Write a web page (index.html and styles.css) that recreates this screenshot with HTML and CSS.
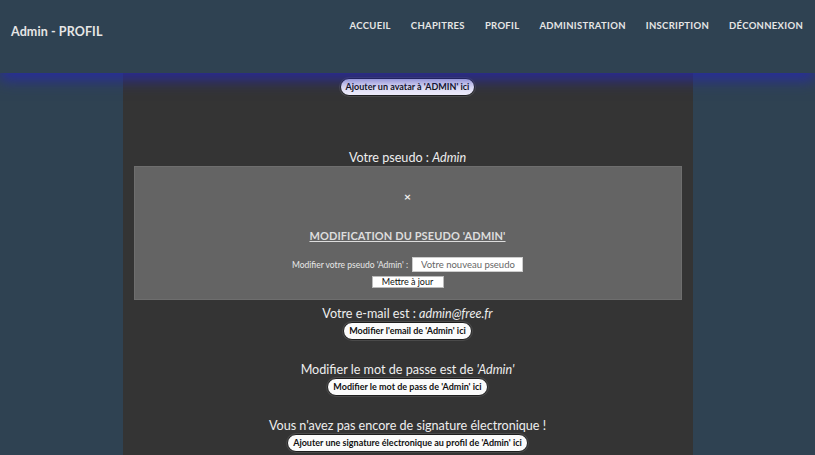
FILE: index.html
```html
<!DOCTYPE html>
<html lang="fr">
<head>
<meta charset="utf-8">
<title>Admin - PROFIL</title>
<link rel="stylesheet" href="styles.css">
</head>
<body>
<header class="topbar">
  <div class="brand">Admin - PROFIL</div>
  <nav class="nav">
    <a href="#">ACCUEIL</a>
    <a href="#">CHAPITRES</a>
    <a href="#">PROFIL</a>
    <a href="#">ADMINISTRATION</a>
    <a href="#">INSCRIPTION</a>
    <a href="#">DÉCONNEXION</a>
  </nav>
</header>
<main class="page">
  <section class="column">
    <button class="pill avatar">Ajouter un avatar à 'ADMIN' ici</button>
    <p class="line pseudo">Votre pseudo : <em>Admin</em></p>
    <div class="modal">
      <div class="close">×</div>
      <h2 class="modal-title">MODIFICATION DU PSEUDO 'ADMIN'</h2>
      <form class="form">
        <div class="row">
          <label>Modifier votre pseudo 'Admin' :</label>
          <input type="text" placeholder="Votre nouveau pseudo">
        </div>
        <button type="button" class="submit">Mettre à jour</button>
      </form>
    </div>
    <p class="line email">Votre e-mail est : <em>admin@free.fr</em></p>
    <button class="pill">Modifier l'email de 'Admin' ici</button>
    <p class="line pass">Modifier le mot de passe est de <em>'Admin'</em></p>
    <button class="pill">Modifier le mot de pass de 'Admin' ici</button>
    <p class="line sig">Vous n'avez pas encore de signature électronique !</p>
    <button class="pill">Ajouter une signature électronique au profil de 'Admin' ici</button>
  </section>
</main>
</body>
</html>
```
FILE: styles.css
```css
* { box-sizing: border-box; }
html, body { margin: 0; padding: 0; }
body {
  background: #2f4252;
  font-family: "Lato", "Open Sans", sans-serif;
  color: #eeeeee;
  height: 455px;
  overflow: hidden;
}
.topbar {
  position: relative;
  z-index: 2;
  height: 73px;
  background: #2f4252;
  display: flex;
  align-items: flex-start;
  justify-content: space-between;
  padding: 0 12px 0 11px;
  box-shadow: 0 7px 14px rgba(38, 40, 175, 0.8);
}
.brand {
  margin-top: 24px;
  font-weight: 700;
  font-size: 12.5px;
  letter-spacing: 0.1px;
  color: #e6e6e6;
}
.nav {
  display: flex;
  gap: 20px;
  margin-top: 20px;
}
.nav a {
  color: #e6e6e6;
  text-decoration: none;
  font-weight: 700;
  font-size: 9.5px;
  letter-spacing: 0.3px;
}
.page {
  display: flex;
  justify-content: center;
}
.column {
  width: 570px;
  background: #343434;
  min-height: 400px;
  display: flex;
  flex-direction: column;
  align-items: center;
  padding: 5px 11px 0;
}
.pill {
  font-family: "Lato", sans-serif;
  font-weight: 700;
  font-size: 9px;
  color: #111;
  background: #fbfbfb;
  border: 1px solid #1e1e1e;
  border-radius: 9px;
  height: 18px;
  padding: 0 5px;
  line-height: 16px;
  box-shadow: 0 0 0 1px #4a4a4a;
}
.avatar { background: #efedfb; }
.line {
  margin: 0;
  font-size: 12.6px;
  line-height: 16px;
  color: #eeeeee;
}
.pseudo { margin-top: 54px; }
.email { margin-top: 6px; }
.pass { margin-top: 22px; }
.sig { margin-top: 22px; }
.modal {
  width: 548px;
  height: 134px;
  background: #646464;
  border: 1px solid #6e6e6e;
  margin-top: 0;
  display: flex;
  flex-direction: column;
  align-items: center;
}
.close {
  margin-top: 23px;
  font-size: 12px;
  font-weight: 700;
  color: #f0f0f0;
  line-height: 14px;
}
.modal-title {
  margin: 25px 0 0;
  font-size: 11px;
  font-weight: 700;
  color: #dddddd;
  text-decoration: underline;
  letter-spacing: 0.1px;
}
.form {
  margin-top: 15px;
  display: flex;
  flex-direction: column;
  align-items: center;
}
.row {
  display: flex;
  align-items: center;
  gap: 4px;
}
.row label {
  font-size: 8.5px;
  color: #e8e8e8;
}
.row input {
  width: 111px;
  height: 15px;
  border: 1px solid #ccc;
  background: #fff;
  padding: 0 6px 0 8px;
  font-family: "Lato", sans-serif;
  font-size: 9.5px;
}
.row input::placeholder { color: #666; }
.submit {
  margin-top: 4px;
  width: 72px;
  height: 12px;
  padding: 0;
  border: 1px solid #bbb;
  background: #fff;
  font-family: "Lato", sans-serif;
  font-size: 9px;
  line-height: 10px;
  color: #111;
}
```
